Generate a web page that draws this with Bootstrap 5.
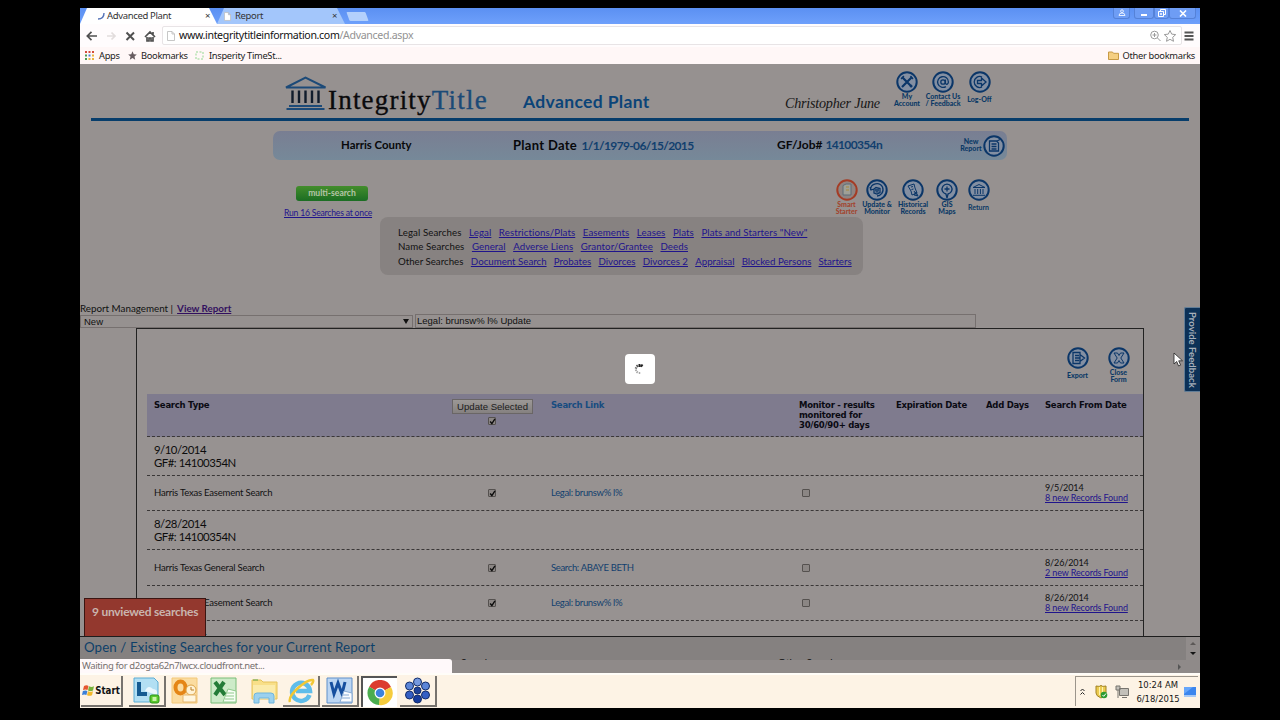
<!DOCTYPE html>
<html lang="en">
<head>
<meta charset="utf-8">
<meta name="viewport" content="width=device-width, initial-scale=1">
<title>Advanced Plant</title>
<link rel="stylesheet" href="https://cdn.jsdelivr.net/npm/bootstrap@5.3.0/dist/css/bootstrap.min.css">
<style>
:root{--page:#969190;--navy:#0b4478;--treb:Lato,"Open Sans",sans-serif;--tah:"DejaVu Sans Condensed","Noto Sans",sans-serif;--ver:"DejaVu Sans",sans-serif}
body{background:#000;height:720px;overflow:hidden;font-family:var(--treb);font-size:10px;line-height:1.2;color:#111;white-space:nowrap}
svg{display:block;flex:none}
.desk{width:1120px;height:700px;margin:8px 80px 0}
/* browser chrome */
.strip{height:16px;background:linear-gradient(#5b90f2,#6ea0fb);font-family:"Noto Sans",sans-serif;font-size:9.5px;letter-spacing:-.35px;color:#333}
.tab-on,.tab-off{height:16px;clip-path:polygon(0 100%,7px 0,calc(100% - 8px) 0,100% 100%)}
.tab-on{width:137px;background:#fff;padding:0 7px 0 17px}
.tab-off{width:128px;background:#a3c6fb;padding:0 8px 0 7px}
.tab-new{width:19px;height:9px;background:#b3d0fc;transform:skewX(20deg);border-radius:1px;margin:0 0 0 3px}
.winbtn{height:11px;border:1px solid #5582d8;border-top:0;border-radius:0 0 3px 3px;background:#6e9df5}
.tools{height:23px;background:#fffcfd}
.addr{height:19px;border:1px solid #e8e4e6;border-radius:2px;background:#fff;width:1020px;font:10.6px/17px "Noto Sans",sans-serif;color:#111}
.url{letter-spacing:-.34px}
.marks{height:17px;background:#fff7f7;font:9.3px/17px "Noto Sans",sans-serif;letter-spacing:-.3px;color:#222}
/* page */
.page-top{height:572px;background:var(--page)}
.brand-row{height:54px}
.logo-text{font:27px/30px "Liberation Serif",serif;letter-spacing:1.2px;color:#0a0a0c;-webkit-text-stroke:.35px}
.logo-text span{color:#1b4a77}
.title{font-weight:700;font-size:17.5px;letter-spacing:.35px;color:var(--navy)}
.user{font:italic 14.2px/18px "Liberation Serif",serif;letter-spacing:-.25px;color:#161616}
.rule{height:3px;margin:0 11px;background:#073d6b}
.bar{margin:10px 193px 0;width:734px;height:29px;border-radius:7px;background:linear-gradient(#797e92,#768999);font-weight:700;font-size:12px;color:#08080a;display:grid;grid-template-columns:68px 172px 264px 183px 47px;line-height:28px}
.bar span span,.blue{color:#123f6e}
.bar .num{letter-spacing:-.65px}
.blue{letter-spacing:-.35px}
.ico-label{font-weight:900;font-size:7px;line-height:7px;color:#0b3966;text-align:center;margin-top:-1px}
.ring{fill:#838fa2;stroke:#0b3668;stroke-width:2}
.ln{fill:none;stroke:#0b3668;stroke-width:1.3}
.multi{width:72px;height:15px;border-radius:3px;background:linear-gradient(#438d2c,#1b6d23);color:#b5c5a8;font-weight:700;font-size:8.6px;line-height:14px;text-align:center}
.page-top a{color:#1f148c;text-decoration:underline}
.searches{margin-left:300px;width:483px;height:58px;border-radius:8px;background:#878281;padding:7.5px 18px 0;font-size:9.7px;line-height:14.7px}
.searches a{margin-left:7.5px}
.s1{letter-spacing:.09px}.s2{letter-spacing:.07px}
.s3 a{margin-left:7.2px}
.mgmt{height:14px;font-size:9.8px;line-height:14px}
.fld{height:14px;border:1px solid #76706f;font:9.5px/12px "Liberation Sans",sans-serif}
.panel{margin-left:56px;width:1008px;height:308px;border:1px solid #222;border-bottom:0;background:#979291}
.gr{display:grid;grid-template-columns:278px 119px 248px 97px 90px 59px 105px;padding-left:7px;margin-left:10px;border-bottom:1px dashed #3a3737;font-size:9.5px}
.st{letter-spacing:-.2px}
.hd{height:43px;background:#7f7b8e;font:700 8.5px/10px var(--ver);letter-spacing:-.25px;color:#0a0a12}
.upd{border:1px solid #6a6666;background:linear-gradient(#9c9896,#858180);font:9.6px/13px "Liberation Sans",sans-serif;letter-spacing:0;color:#1c1c1c;width:81px;height:15px}
.ck{width:8px;height:8px;border:1px solid #55514f;border-radius:1px;background:#8b8684}
.grp{font-size:11.4px;line-height:13px;letter-spacing:-.5px;color:#0c0c0c}
.dt{font-size:9px;line-height:10px;letter-spacing:-.12px}
/* overlays */
.feed{right:0;top:243px;width:16px;height:85px;background:#0c3157;border:1px solid #617d97;border-right:0;border-radius:2px 0 0 2px;color:#a7afba;font-weight:700;font-size:9.6px;writing-mode:vertical-rl;line-height:12px;padding-right:2px;text-align:center}
.unv{left:4px;top:534px;width:122px;height:38px;background:#93382e;border:1px solid #3a1512;border-bottom:0;color:#c9b5ae;font-size:12px;letter-spacing:-.25px;font-weight:700;padding:6px 0 0 7px}
.load{left:545px;top:290px;width:30px;height:30px;border-radius:4px;background:#fff}
.stat{left:0;bottom:0;width:372px;height:14px;background:#fff9fa;border-radius:0 3px 0 0;font:9.5px/14px "Noto Sans",sans-serif;letter-spacing:-.38px;color:#77706f;padding-left:2px}
.bottomframe{height:24px;border-top:1px solid #1d1d1d;background:#858180;overflow:hidden}
.open{height:18px;font-size:13.3px;line-height:21px;letter-spacing:.1px;color:#0d4069;padding-left:4px}
.heads{display:grid;grid-template-columns:381px 317px 1fr;line-height:12px;margin-top:1px}
.hsb{height:13px;background:#8f8a89}
/* taskbar */
.task{height:35px;background:#fdf3e5;border-top:2px solid #fffdf8}
.tb{width:37px;height:31px;margin-top:1px;border-right:2px solid #77736e;border-bottom:2px solid #77736e;display:flex;align-items:center;justify-content:center}
.flat{border-color:transparent}
.tray{width:123px;height:30px;border:1px solid #9c958b;border-right:0;border-bottom:0;margin:1px 2px 0 auto;font:9.4px/13px var(--tah);color:#161616}
</style>
</head>
<body>
<svg width="0" height="0" class="position-absolute">
<symbol id="doc" viewBox="0 0 8 10"><path d="M.5.5h4.500l2.500 2.500v6.500h-7zM5 .5v2.500h2.500" fill="#fff" stroke="#b9b9b9" stroke-width=".8"/></symbol>
<symbol id="tick" viewBox="0 0 8 8"><path d="M1.300 4l2 2.300L6.800 1" fill="none" stroke="#0c0c0c" stroke-width="1.600"/></symbol>
</svg>
<main class="desk d-flex flex-column position-relative">
<div class="strip d-flex">
  <div class="tab-on d-flex align-items-center">
    <svg width="8" height="8" viewBox="0 0 8 8"><path d="M7 1c0 4-2 6-6 6" fill="none" stroke="#5573b8" stroke-width="1.400"/></svg>
    <span style="margin-left:2px">Advanced Plant</span><span class="ms-auto">×</span></div>
  <div class="tab-off d-flex align-items-center"><svg width="7" height="9"><use href="#doc"/></svg><span class="ms-1">Report</span><span class="ms-auto">×</span></div>
  <div class="tab-new mt-1"></div>
  <div class="ms-auto d-flex" style="margin-right:4px">
    <div class="winbtn d-flex justify-content-center align-items-center me-1" style="width:17px"><svg width="8" height="8" viewBox="0 0 8 8"><circle cx="4" cy="2.200" r="1.400" fill="none" stroke="#e6efff"/><path d="M1 6.500q0-2.500 3-2.500t3 2.500z" fill="none" stroke="#e6efff"/></svg></div>
    <div class="winbtn d-flex justify-content-center align-items-center" style="width:20px"><svg width="8" height="7"><path d="M1 4h6v2H1z" fill="#fff"/></svg></div>
    <div class="winbtn d-flex justify-content-center align-items-center" style="width:15px"><svg width="8" height="8" viewBox="0 0 8 8"><path d="M2.500 2V.5h5v5H6M.5 2.500h5v5h-5zM2.500 4.500h1v1h-1z" fill="none" stroke="#fff"/></svg></div>
    <div class="winbtn d-flex justify-content-center align-items-center" style="width:27px"><svg width="8" height="7" viewBox="0 0 8 7"><path d="M1 .5l6 6M7 .5l-6 6" stroke="#fff" stroke-width="1.600"/></svg></div>
  </div>
</div>
<div class="tools d-flex align-items-center">
  <svg width="82" height="20" viewBox="80 26 82 20" fill="none" stroke="#505050" stroke-width="1.700"><path d="M97 36h-9M91.500 31.800L87.300 36l4.200 4.200"/><path d="M107 36h8M111.500 32.500l3.500 3.500-3.500 3.500" stroke="#e2dddd"/><path d="M126.500 32.500l7.500 7.500M134 32.500l-7.500 7.500" stroke-width="2"/><path d="M145 37l5-5 5 5M147 37v4h2v-3h2v3h2v-4M153 32v3" /></svg>
  <div class="addr d-flex align-items-center"><svg width="8" height="10" class="ms-1"><use href="#doc"/></svg><span class="url" style="margin-left:4px">www.integritytitleinformation.com<span style="color:#929292">/Advanced.aspx</span></span>
    <svg width="30" height="14" viewBox="0 0 30 14" class="ms-auto" style="margin-right:3px" fill="none" stroke="#9a9a9a"><circle cx="6.500" cy="6" r="3.800"/><path d="M9.500 9l3 3M4.500 6h4M6.500 4v4M22 1.500l1.700 3.600 4 .5-3 2.700.8 4-3.500-2-3.500 2 .8-4-3-2.700 4-.5z"/></svg></div>
  <svg width="10" height="10" viewBox="0 0 10 10" style="margin-left:2px"><path d="M.5 1.500h9M.5 5h9M.5 8.500h9" stroke="#555" stroke-width="2"/></svg>
</div>
<div class="marks d-flex align-items-center">
  <svg width="9" height="9" viewBox="0 0 9 9" style="margin-left:5px"><path d="M0 1h2M7 1h2" stroke="#d34a3a" stroke-width="2"/><path d="M3.500 1h2" stroke="#d34a3a" stroke-width="2"/><path d="M0 4.500h2" stroke="#4a9a50" stroke-width="2"/><path d="M3.500 4.500h2" stroke="#4a7ad8" stroke-width="2"/><path d="M7 4.500h2M3.500 8h2M7 8h2" stroke="#e8b43c" stroke-width="2"/><path d="M0 8h2" stroke="#4a9a50" stroke-width="2"/></svg>
  <span style="margin-left:5px;width:29px">Apps</span>
  <svg width="9" height="9" viewBox="0 0 10 10"><path d="M5 .3l1.400 3.200 3.400.3-2.600 2.300.8 3.500L5 7.800 2 9.600l.8-3.500L.2 3.800l3.400-.3z" fill="#675c60"/></svg>
  <span style="margin-left:4px;width:54px">Bookmarks</span>
  <svg width="9" height="9"><path d="M1 1h7v7H1z" fill="none" stroke="#c9e8c4" stroke-width="2" stroke-dasharray="2 1.500"/></svg>
  <span style="margin-left:5px">Insperity TimeSt...</span>
  <svg width="11" height="9" viewBox="0 0 11 9" class="ms-auto"><path d="M.5 8.500V1h4l1 1.300h5v6.200z" fill="#f5cf82" stroke="#c79a45"/></svg>
  <span style="margin:0 5px 0 4px">Other bookmarks</span>
</div>

<section class="position-relative d-flex flex-column flex-grow-1 overflow-hidden">
<div class="page-top overflow-hidden">
  <div class="brand-row d-flex">
    <svg width="44" height="37" viewBox="0 0 44 37" style="margin:11px 0 0 204px"><path d="M2 12.500L21.500 2.500l20 10z" fill="none" stroke="#1c4a78" stroke-width="2"/><path d="M5 31h33M2.500 34h38" stroke="#1c4a78" stroke-width="1.800"/><path d="M8.500 15.500v12.500M15 15.500v12.500M21.500 15.500v12.500M28 15.500v12.500M34.500 15.500v12.500" stroke="#101c2c" stroke-width="2.400"/></svg>
    <div class="logo-text" style="width:195px;margin-top:21px">Integrity<span>Title</span></div>
    <div class="title" style="width:262px;margin-top:27px">Advanced Plant</div>
    <div class="user" style="width:105px;margin-top:30px">Christopher June</div>
    <div class="d-flex" style="margin-top:6px">
      <div style="width:34px"><svg width="24" height="24" viewBox="0 0 24 24" class="mx-auto"><circle class="ring" cx="12" cy="12" r="9.700"/><path class="ln" d="M7 7l10 10M17 7L7 17" style="stroke-width:2.2"/><path class="ln" d="M6 9l3-3M15 17l2-2M15.500 6l2.500 3"/></svg><div class="ico-label">My<br>Account</div></div>
      <div style="width:38px"><svg width="24" height="24" viewBox="0 0 24 24" class="mx-auto"><circle class="ring" cx="12" cy="12" r="9.700"/><circle class="ln" cx="12" cy="12" r="2.200"/><path class="ln" d="M14.400 9.500v4c1 1.600 3 .5 3-1.500a5.400 5.400 0 1 0-2.500 4.600"/></svg><div class="ico-label">Contact Us<br>/ Feedback</div></div>
      <div style="width:35px"><svg width="24" height="24" viewBox="0 0 24 24" class="mx-auto"><circle class="ring" cx="12" cy="12" r="9.700"/><path class="ln" d="M14 7a5.500 5.500 0 1 0 0 10M9.500 10.500h4V8l4.500 4-4.500 4v-2.500h-4z"/></svg><div class="ico-label" style="padding-top:3px">Log-Off</div></div>
    </div>
  </div>
  <div class="rule"></div>
  <div class="bar"><i></i><span style="font-size:11.4px">Harris County</span><span style="font-size:13px;letter-spacing:.3px">Plant Date <span class="num" style="font-size:12px;margin-left:1px">1/1/1979-06/15/2015</span></span><span>GF/Job# <span class="num">14100354n</span></span>
    <div class="d-flex align-items-center"><div class="ico-label" style="width:22px">New<br>Report</div><svg width="24" height="24" viewBox="0 0 24 24"><circle class="ring" cx="12" cy="12" r="9.700"/><path class="ln" d="M7.500 7h7l2 2v8h-9zM9.500 10h5M9.500 12.500h5M9.500 15h5M15 7l3-1.500"/></svg></div>
  </div>
  <div class="d-flex" style="height:57px;padding-top:18px">
    <div style="margin-left:204px;width:96px"><div class="multi" style="margin:8px 0 0 12px">multi-search</div><a href="#" class="d-block" style="font-size:8.6px;letter-spacing:-.2px;margin-top:7px">Run 16 Searches at once</a></div>
    <div class="d-flex" style="margin-left:451px">
      <div style="width:31px"><svg width="24" height="24" viewBox="0 0 24 24" class="mx-auto"><circle class="ring" cx="12" cy="12" r="9.700" style="stroke:#a43c25;fill:#8f8582"/><path d="M8 7.500l3-1.500h5v11H8z" fill="#a0a096" stroke="#5d6d78"/><path d="M11 9h3M11 12h3" stroke="#a8893a"/></svg><div class="ico-label" style="color:#a2452f">Smart<br>Starter</div></div>
      <div style="width:30px"><svg width="24" height="24" viewBox="0 0 24 24" class="mx-auto"><circle class="ring" cx="12" cy="12" r="9.700"/><path class="ln" d="M5.500 12c0-7 9-8.500 12-3 2 5-2 9-5.500 9M5 9l1 3 3-1M9 11l2-1.500 4 1v4l-3 1.500-3-1zM10 12h4M10.500 13.800h3"/></svg><div class="ico-label">Update &amp;<br>Monitor</div></div>
      <div style="width:42px"><svg width="24" height="24" viewBox="0 0 24 24" class="mx-auto"><circle class="ring" cx="12" cy="12" r="9.700"/><path class="ln" d="M7 8l6-2 1 4 2 5-5 2-1-4zM13 13l3 5M10 9l2-.5M10.500 11.500l2-.5M15 14l-2 3 4 1z" style="stroke-width:1"/></svg><div class="ico-label">Historical<br>Records</div></div>
      <div style="width:26px"><svg width="24" height="24" viewBox="0 0 24 24" class="mx-auto"><circle class="ring" cx="12" cy="12" r="9.700"/><path class="ln" d="M12 20l-1-4a5 5 0 1 1 2 0zM12 8.500v5M9.500 11h5"/></svg><div class="ico-label">GIS<br>Maps</div></div>
      <div style="width:37px"><svg width="24" height="24" viewBox="0 0 24 24" class="mx-auto"><circle class="ring" cx="12" cy="12" r="9.700"/><path class="ln" d="M6 9.500l6-3 6 3zM8 11v5M10.700 11v5M13.400 11v5M16 11v5M6 17.300h12" style="stroke-width:1"/></svg><div class="ico-label" style="padding-top:3px;font-weight:700">Return</div></div>
    </div>
  </div>
  <div class="searches">
    <div class="s1">Legal Searches <a href="#" style="margin-left:5px">Legal</a><a href="#">Restrictions/Plats</a><a href="#">Easements</a><a href="#">Leases</a><a href="#">Plats</a><a href="#">Plats and Starters "New"</a></div>
    <div class="s2">Name Searches <a href="#" style="margin-left:5px">General</a><a href="#">Adverse Liens</a><a href="#">Grantor/Grantee</a><a href="#">Deeds</a></div>
    <div class="s3">Other Searches <a href="#" style="margin-left:5px">Document Search</a><a href="#">Probates</a><a href="#">Divorces</a><a href="#">Divorces 2</a><a href="#">Appraisal</a><a href="#">Blocked Persons</a><a href="#">Starters</a></div>
  </div>
  <div class="mgmt" style="margin-top:26px">Report Management | &nbsp;<a href="#" class="fw-bold" style="color:#32105f;margin-left:-1px">View Report</a></div>
  <div class="d-flex" style="height:14px;margin-top:-1px;gap:2px"><div class="fld d-flex justify-content-between align-items-center" style="width:333px;height:13px;margin-top:1px;padding:0 3px"><span>New</span><svg width="6" height="5"><path d="M0 0h6L3 5z" fill="#111"/></svg></div><div class="fld" style="width:561px;padding-left:1px">Legal: brunsw% l% Update</div></div>
  <div class="panel">
    <div class="d-flex justify-content-end" style="height:65px;padding:17px 4px 0 0">
      <div style="width:41px"><svg width="24" height="24" viewBox="0 0 24 24" class="mx-auto"><circle class="ring" cx="12" cy="12" r="9.700"/><path class="ln" d="M14 9V6.500H7v11h7V15M9 9.500h4M9 14.500h4M9 12h5M14 10V8.500l4.500 3.500-4.500 3.500V14z"/></svg><div class="ico-label" style="padding-top:3px">Export</div></div>
      <div style="width:41px"><svg width="24" height="24" viewBox="0 0 24 24" class="mx-auto"><circle class="ring" cx="12" cy="12" r="9.700"/><path class="ln" d="M7 7h3.500L12 9.500 13.500 7H17l-3.200 5 3.200 5h-3.500L12 14.500 10.500 17H7l3.200-5z" style="stroke-width:1"/></svg><div class="ico-label">Close<br>Form</div></div>
    </div>
    <div class="gr hd"><span style="padding-top:6px">Search Type</span><div style="padding:5px 0 0 12px"><div class="upd text-center" style="margin-left:8px">Update Selected</div><div class="ck" style="margin:3px 0 0 44px"><svg width="7" height="7"><use href="#tick"/></svg></div></div><span style="padding-top:6px;color:#174c80">Search Link</span><span style="padding-top:6px">Monitor - results<br>monitored for<br>30/60/90+ days</span><span style="padding-top:6px">Expiration Date</span><span style="padding-top:6px">Add Days</span><span style="padding-top:6px">Search From Date</span></div>
    <div class="gr" style="height:39px"><div class="grp" style="padding-top:6px">9/10/2014<br>GF#: 14100354N</div></div>
    <div class="gr align-items-center" style="height:35px"><span class="st">Harris Texas Easement Search</span><div class="ck" style="margin-left:56px"><svg width="7" height="7"><use href="#tick"/></svg></div><span class="blue">Legal: brunsw% l%</span><div class="ck" style="margin-left:3px"></div><i></i><i></i><div class="dt">9/5/2014<br><a href="#">8 new Records Found</a></div></div>
    <div class="gr" style="height:39px"><div class="grp" style="padding-top:6px">8/28/2014<br>GF#: 14100354N</div></div>
    <div class="gr align-items-center" style="height:36px"><span class="st">Harris Texas General Search</span><div class="ck" style="margin-left:56px"><svg width="7" height="7"><use href="#tick"/></svg></div><span class="blue">Search: ABAYE BETH</span><div class="ck" style="margin-left:3px"></div><i></i><i></i><div class="dt">8/26/2014<br><a href="#">2 new Records Found</a></div></div>
    <div class="gr align-items-center" style="height:35px"><span class="st">Harris Texas Easement Search</span><div class="ck" style="margin-left:56px"><svg width="7" height="7"><use href="#tick"/></svg></div><span class="blue">Legal: brunsw% l%</span><div class="ck" style="margin-left:3px"></div><i></i><i></i><div class="dt">8/26/2014<br><a href="#">8 new Records Found</a></div></div>
    <div class="gr" style="height:39px"><div class="grp" style="padding-top:5px">8/25/2014</div></div>
  </div>
</div>
<div class="bottomframe d-flex">
  <div style="width:1106px">
    <div class="open">Open / Existing Searches for your Current Report</div>
    <div class="heads"><i></i><span>Searches</span><span>Other Searches</span></div>
  </div>
  <svg width="14" height="23" style="background:#918c8b"><path d="M4 8l3-3 3 3z" fill="#5c5857"/><path d="M4 15h6l-3 3z" fill="#151515"/></svg>
</div>
<div class="hsb d-flex justify-content-end"><svg width="24" height="13"><path d="M2 4l3 3-3 3z" fill="#555"/></svg></div>

<div class="feed position-absolute">Provide Feedback</div>
<div class="unv position-absolute">9 unviewed searches</div>
<div class="load position-absolute"><svg width="30" height="30" fill="none" stroke-width="1.500"><path d="M14.500 10v3M17.500 10.500l-1.500 2.300" stroke="#222" stroke-width="2"/><path d="M11.500 11l1.500 2" stroke="#555"/><path d="M10 13.500l2 1" stroke="#777"/><path d="M10 16.500l2-.5M11.500 19l1.300-1.700M14.500 20v-2" stroke="#aaa"/></svg></div>
<div class="stat position-absolute">Waiting for d2ogta62n7lwcx.cloudfront.net...</div>
<svg class="position-absolute" style="left:1093px;top:288px" width="11" height="16" viewBox="0 0 11 16"><path d="M1 1v11l2.700-2.500 1.900 4.500 2-.9-1.900-4.300H9.500z" fill="#fff" stroke="#222" stroke-width=".8"/></svg>
</section>

<footer class="task d-flex">
  <div class="tb" style="width:42px;margin-left:1px;font:700 9.6px 'DejaVu Sans Condensed',sans-serif;color:#111"><svg width="13" height="13" viewBox="0 0 13 13"><path d="M2 2q2.500-1.500 4.500 0L5.500 6q-2-1.200-4.500 0z" fill="#e5572f"/><path d="M7 2.300q2.500 1.200 5 0L11 6.500q-2.500 1-5 0z" fill="#79b33b"/><path d="M.9 7q2.500-1.200 4.500 0l-1 4q-2-1-4.400 0z" fill="#3c80d8"/><path d="M6 7.200q2.500 1.200 5 0l-1 4q-2.500 1-5 0z" fill="#f3b92c"/></svg>Start</div>
  <div class="tb" style="margin-left:6px"><svg width="27" height="27" viewBox="0 0 27 27"><path d="M1 1h20l4 4v20H1z" fill="#b2dff3" stroke="#5aacd4"/><path d="M6 5v12h8" fill="none" stroke="#155b91" stroke-width="4"/><path d="M12 14q3-7 8-2 5 0 4 6" fill="#eaf7fd"/><rect x="17" y="18" width="9" height="8" rx="2" fill="#5ac92c" stroke="#2e941a"/><rect x="19.500" y="20" width="4" height="4" fill="#c8f4a8"/></svg></div>
  <div class="tb flat" style="margin-left:1px"><svg width="27" height="27" viewBox="0 0 27 27"><path d="M1 1h25v25H1z" fill="#fbdca0" stroke="#f3c878"/><ellipse cx="9.500" cy="10.500" rx="5" ry="6" fill="none" stroke="#e58616" stroke-width="4"/><circle cx="20" cy="13" r="5" fill="#fff2d4" stroke="#dba449"/><path d="M20 10v3h3" fill="none" stroke="#b77d28"/><path d="M12 18h13v7H12z" fill="#fff6df" stroke="#e6b76e"/></svg></div>
  <div class="tb flat" style="margin-left:2px"><svg width="27" height="27" viewBox="0 0 27 27"><path d="M1 1h25v25H1z" fill="#cdebc8" stroke="#78bd79"/><path d="M5 5l10 13M14 5L5 18" stroke="#237c37" stroke-width="4"/><path d="M18 12l8 2v11H13z" fill="#f7fff5" stroke="#91c98d"/><path d="M17 16h7M16 19h8M15 22h9" stroke="#91c98d"/></svg></div>
  <div class="tb flat" style="margin-left:3px"><svg width="28" height="27" viewBox="0 0 28 27"><path d="M2 3h9l2 2h14v17H2z" fill="#f8df88" stroke="#e5c25b"/><path d="M3 8h22v14H3z" fill="#fbebab"/><path d="M4 26v-7q0-3 3-3h14q3 0 3 3v7h-5v-5H9v5z" fill="#9bd1ee" stroke="#6eb5dd"/><path d="M3 3h5" stroke="#60a64b"/></svg></div>
  <div class="tb" style="margin-left:0"><svg width="28" height="28" viewBox="0 0 28 28"><path d="M22.500 18a9 9 0 1 1 .5-4H9" fill="none" stroke="#5fbdea" stroke-width="4.500"/><path d="M3 25Q1 20 11 11T26 3q1 2-2 5" fill="none" stroke="#f1c735" stroke-width="2.500"/></svg></div>
  <div class="tb" style="margin-left:2px"><svg width="27" height="27" viewBox="0 0 27 27"><path d="M1 1h25v25H1z" fill="#bcd6f3" stroke="#5e8fc9"/><path d="M5 5l3 12 4-11 4 11 3-12" fill="none" stroke="#164f9f" stroke-width="3"/><path d="M18 14l8 2v9H14z" fill="#f8fbff" stroke="#89abd4"/><path d="M17 18h6M16 21h8" stroke="#89abd4"/></svg></div>
  <div class="tb" style="margin-left:2px;background:#fff;border:0;border-left:2px solid #555;border-top:2px solid #555;width:36px"><svg width="26" height="26" viewBox="0 0 26 26"><path d="M13 13L2.200 6.800A12 12 0 0 1 24 7z" fill="#dc3b2f"/><path d="M13 13L24 7a12 12 0 0 1-12 18z" fill="#f6cc3c"/><path d="M13 13l-1 12A12 12 0 0 1 2.200 6.800z" fill="#4bad4e"/><circle cx="13" cy="13" r="5.500" fill="#fff"/><circle cx="13" cy="13" r="4.300" fill="#3c83dd"/></svg></div>
  <div class="tb" style="margin-left:3px"><svg width="27" height="27" viewBox="0 0 27 27" fill="#345fc4" stroke="#122c69"><circle cx="13.500" cy="5" r="4" fill="#7599df"/><circle cx="5.500" cy="9" r="4" fill="#5c86d8"/><circle cx="21.500" cy="9" r="4" fill="#5c86d8"/><circle cx="5.500" cy="18" r="4"/><circle cx="21.500" cy="18" r="4"/><circle cx="13.500" cy="22" r="4" fill="#163c9e"/><circle cx="13.500" cy="13.500" r="3.500" fill="#1d4299"/></svg></div>
  <div class="tray d-flex align-items-center">
    <svg width="5" height="8" viewBox="0 0 5 8" style="margin-left:4px"><path d="M.5 3L2.500 1l2 2M.5 6.500l2-2 2 2" fill="none" stroke="#222"/></svg>
    <svg width="13" height="14" viewBox="0 0 13 14" style="margin-left:10px"><path d="M1 1q5 1 5-1 0 2 5 1v7q0 3-5 5-5-2-5-5z" fill="#eccb50" stroke="#a08224"/><path d="M4.500 2v8M7.500 2v6" stroke="#fff3ae"/><circle cx="9" cy="10" r="3.300" fill="#2d9b32"/><path d="M7.500 10l1.200 1.300L11 8.500" stroke="#fff" fill="none"/></svg>
    <svg width="14" height="14" viewBox="0 0 14 14" style="margin-left:7px"><path d="M4.500 3.500h9v7h-9zM7 12.500h5M1 1h4v4H1zM3 5v8" fill="#c3c0b9" stroke="#77746e"/></svg>
    <div class="text-center" style="width:50px;margin-left:4px"><div style="margin-bottom:1px">10:24 AM</div><div>6/18/2015</div></div>
    <svg width="12" height="10" style="margin-left:1px"><path d="M0 0h12v9H0z" fill="#3c86ee"/><path d="M0 9h12" stroke="#a8c9f4" stroke-width="2"/><path d="M0 0h9L0 7z" fill="#67a6fa"/></svg>
  </div>
</footer>
</main>
<script src="https://cdn.jsdelivr.net/npm/bootstrap@5.3.0/dist/js/bootstrap.bundle.min.js"></script>
</body>
</html>
